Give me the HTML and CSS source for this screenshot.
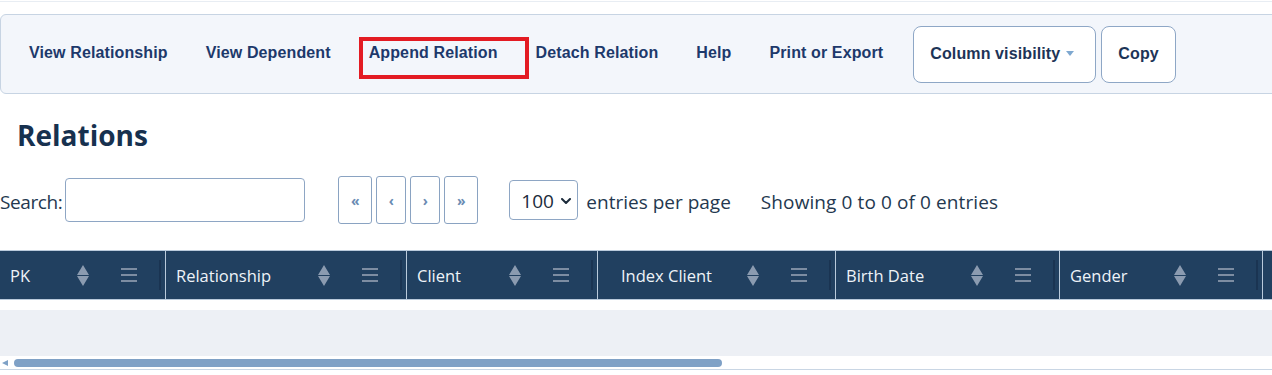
FILE: index.html
```html
<!DOCTYPE html>
<html lang="en">
<head>
  <meta charset="UTF-8">
  <meta name="viewport" content="width=device-width, initial-scale=1.0">
  <title>Relations</title>
  <link rel="stylesheet" href="styles.css">
</head>
<body>
  <div class="topline"></div>

  <nav class="toolbar">
    <a class="tb-link" href="#">View Relationship</a>
    <a class="tb-link" href="#">View Dependent</a>
    <a class="tb-link tb-marked" href="#">Append Relation<span class="mark"></span></a>
    <a class="tb-link" href="#">Detach Relation</a>
    <a class="tb-link" href="#">Help</a>
    <a class="tb-link" href="#">Print or Export</a>
    <button class="tb-btn tb-btn-wide" type="button">Column visibility<span class="caret"></span></button>
    <button class="tb-btn" type="button">Copy</button>
  </nav>

  <h1 class="title">Relations</h1>

  <div class="controls">
    <label class="search-label" for="search">Search:</label>
    <input class="search-input" type="text" id="search">

    <div class="pager">
      <button class="pg-btn pg-wide" type="button">&laquo;</button>
      <button class="pg-btn" type="button">&lsaquo;</button>
      <button class="pg-btn" type="button">&rsaquo;</button>
      <button class="pg-btn pg-wide" type="button">&raquo;</button>
    </div>

    <div class="per-page">
      <span>100</span>
      <svg width="10" height="6" viewBox="0 0 10 6"><path d="M1 1l4 4 4-4" fill="none" stroke="#1c2b3b" stroke-width="2" stroke-linecap="round" stroke-linejoin="round"/></svg>
    </div>
    <span class="per-page-text">entries per page</span>
    <span class="info">Showing 0 to 0 of 0 entries</span>
  </div>

  <div class="table-wrap">
    <table class="grid">
      <thead>
        <tr>
          <th class="c-pk"><div class="th-in"><span class="th-label">PK</span><svg class="sort" width="12" height="21" viewBox="0 0 12 21"><path d="M6 0L12 10H0z M0 11H12L6 21z" fill="#8b9bb0"/></svg><svg class="menu" width="16" height="14" viewBox="0 0 16 14"><path d="M0 1H16M0 7H16M0 13H16" stroke="#7d8da2" stroke-width="2"/></svg><span class="grip"></span></div></th>
          <th class="c-rel"><div class="th-in"><span class="th-label">Relationship</span><svg class="sort" width="12" height="21" viewBox="0 0 12 21"><path d="M6 0L12 10H0z M0 11H12L6 21z" fill="#8b9bb0"/></svg><svg class="menu" width="16" height="14" viewBox="0 0 16 14"><path d="M0 1H16M0 7H16M0 13H16" stroke="#7d8da2" stroke-width="2"/></svg><span class="grip"></span></div></th>
          <th class="c-client"><div class="th-in"><span class="th-label">Client</span><svg class="sort" width="12" height="21" viewBox="0 0 12 21"><path d="M6 0L12 10H0z M0 11H12L6 21z" fill="#8b9bb0"/></svg><svg class="menu" width="16" height="14" viewBox="0 0 16 14"><path d="M0 1H16M0 7H16M0 13H16" stroke="#7d8da2" stroke-width="2"/></svg><span class="grip"></span></div></th>
          <th class="c-index"><div class="th-in th-indent"><span class="th-label">Index Client</span><svg class="sort" width="12" height="21" viewBox="0 0 12 21"><path d="M6 0L12 10H0z M0 11H12L6 21z" fill="#8b9bb0"/></svg><svg class="menu" width="16" height="14" viewBox="0 0 16 14"><path d="M0 1H16M0 7H16M0 13H16" stroke="#7d8da2" stroke-width="2"/></svg><span class="grip"></span></div></th>
          <th class="c-birth"><div class="th-in"><span class="th-label">Birth Date</span><svg class="sort" width="12" height="21" viewBox="0 0 12 21"><path d="M6 0L12 10H0z M0 11H12L6 21z" fill="#8b9bb0"/></svg><svg class="menu" width="16" height="14" viewBox="0 0 16 14"><path d="M0 1H16M0 7H16M0 13H16" stroke="#7d8da2" stroke-width="2"/></svg><span class="grip"></span></div></th>
          <th class="c-gender"><div class="th-in"><span class="th-label">Gender</span><svg class="sort" width="12" height="21" viewBox="0 0 12 21"><path d="M6 0L12 10H0z M0 11H12L6 21z" fill="#8b9bb0"/></svg><svg class="menu" width="16" height="14" viewBox="0 0 16 14"><path d="M0 1H16M0 7H16M0 13H16" stroke="#7d8da2" stroke-width="2"/></svg><span class="grip"></span></div></th>
          <th class="c-more"></th>
        </tr>
      </thead>
      <tbody>
        <tr>
          <td class="empty-row" colspan="7"></td>
        </tr>
      </tbody>
    </table>
  </div>

  <div class="hscroll">
    <span class="hs-arrow"></span>
    <span class="hs-thumb"></span>
  </div>
</body>
</html>
```

FILE: styles.css
```css
body {
  margin: 0;
  font-family: "Open Sans", sans-serif;
  background-color: #fff;
  overflow: hidden;
}
.topline {
  height: 1px;
  border-bottom: 1px solid #e8edf3;
  margin-bottom: 12px;
}

/* toolbar */
.toolbar {
  display: flex;
  align-items: center;
  height: 78px;
  margin-right: -20px;
  padding-left: 9px;
  background-color: #f3f6fb;
  border: 1px solid #c7d4e3;
  border-radius: 6px;
}
.tb-link {
  align-self: stretch;
  display: flex;
  align-items: center;
  padding: 0 19px 3px;
  font: bold 16px "Liberation Sans", Arial, sans-serif;
  letter-spacing: 0.12px;
  color: #1d396b;
  text-decoration: none;
}
.tb-marked {
  position: relative;
}
.mark {
  position: absolute;
  left: 9px;
  top: 22px;
  width: 170px;
  height: 42px;
  box-sizing: border-box;
  border: 4px solid #e31b23;
}
.tb-btn {
  height: 57px;
  margin-left: 5px;
  padding: 0 16px;
  font: bold 16px "Liberation Sans", Arial, sans-serif;
  letter-spacing: 0.12px;
  color: #1d3457;
  background-color: #fff;
  border: 1px solid #8ea7c6;
  border-radius: 8px;
}
.tb-btn-wide {
  margin-left: 11px;
  padding-right: 21px;
  display: flex;
  align-items: center;
}
.caret {
  width: 0;
  height: 0;
  margin: 0 0 2px 6px;
  border-left: 4.5px solid transparent;
  border-right: 4.5px solid transparent;
  border-top: 5px solid #7ea8d0;
}

/* heading + controls */
.title {
  margin: 21px 0 0;
  padding-left: 17px;
  font-size: 28px;
  font-weight: 700;
  line-height: 40px;
  color: #17314f;
}
.controls {
  display: flex;
  align-items: center;
  height: 48px;
  margin-top: 21px;
  font-size: 19px;
  color: #24384f;
}
.search-label,
.per-page-text,
.info {
  padding-top: 3px;
}
.search-label {
  letter-spacing: -0.4px;
}
.search-input {
  width: 240px;
  height: 44px;
  box-sizing: border-box;
  margin-left: 3px;
  border: 1px solid #8ea6c4;
  border-radius: 4px;
}
.pager {
  display: flex;
  gap: 4px;
  margin-left: 33px;
}
.pg-btn {
  width: 30px;
  height: 48px;
  padding: 0;
  font: bold 14px "Open Sans", sans-serif;
  color: #6a8bb3;
  background-color: #fff;
  border: 1px solid #8aa3c2;
  border-radius: 3px;
}
.pg-wide {
  width: 34px;
}
.per-page {
  display: flex;
  align-items: center;
  justify-content: space-between;
  width: 69px;
  height: 40px;
  box-sizing: border-box;
  margin-left: 31px;
  padding: 2px 6px 0 11px;
  color: #1c2b3b;
  border: 1px solid #8ea6c4;
  border-radius: 4px;
}
.per-page-text {
  margin-left: 8px;
}
.info {
  margin-left: 30px;
  letter-spacing: 0.1px;
}

/* table */
.table-wrap {
  margin-top: 26px;
  overflow: hidden;
}
.grid {
  width: 1480px;
  table-layout: fixed;
  border-spacing: 0;
}
.grid th {
  box-sizing: border-box;
  height: 50px;
  padding: 0;
  background-color: #214060;
  border-top: 1px solid #b9cadb;
  border-bottom: 1px solid #b9cadb;
  border-left: 1px solid #b9cadb;
  font-weight: 400;
  font-size: 16.5px;
  color: #eef3f8;
  text-align: left;
}
.grid th.c-pk { width: 165px; border-left: none; }
.grid th.c-rel { width: 241px; }
.grid th.c-client { width: 191px; }
.grid th.c-index { width: 238px; }
.grid th.c-birth { width: 224px; }
.grid th.c-gender { width: 203px; }
.th-in {
  display: flex;
  align-items: center;
  padding: 0 4px 0 10px;
}
.th-indent {
  padding-left: 23px;
}
.th-label {
  flex: 1;
  white-space: nowrap;
  overflow: hidden;
}
.sort {
  display: block;
}
.menu {
  display: block;
  margin-left: 32px;
}
.grip {
  width: 2px;
  height: 30px;
  margin-left: 22px;
  background-color: #1a3452;
}
.empty-row {
  box-sizing: border-box;
  height: 56px;
  padding: 0;
  border-top: 10px solid #fff;
  background-color: #edf0f5;
}

/* scroll bar */
.hscroll {
  display: flex;
  align-items: center;
  height: 13px;
  padding-left: 2px;
  border-bottom: 1px solid #c9d6e4;
}
.hs-arrow {
  width: 0;
  height: 0;
  border-top: 3.5px solid transparent;
  border-bottom: 3.5px solid transparent;
  border-right: 6px solid #7ea1c6;
}
.hs-thumb {
  width: 708px;
  height: 8px;
  margin-left: 6px;
  background-color: #7fa1c6;
  border-radius: 4px;
}
```
